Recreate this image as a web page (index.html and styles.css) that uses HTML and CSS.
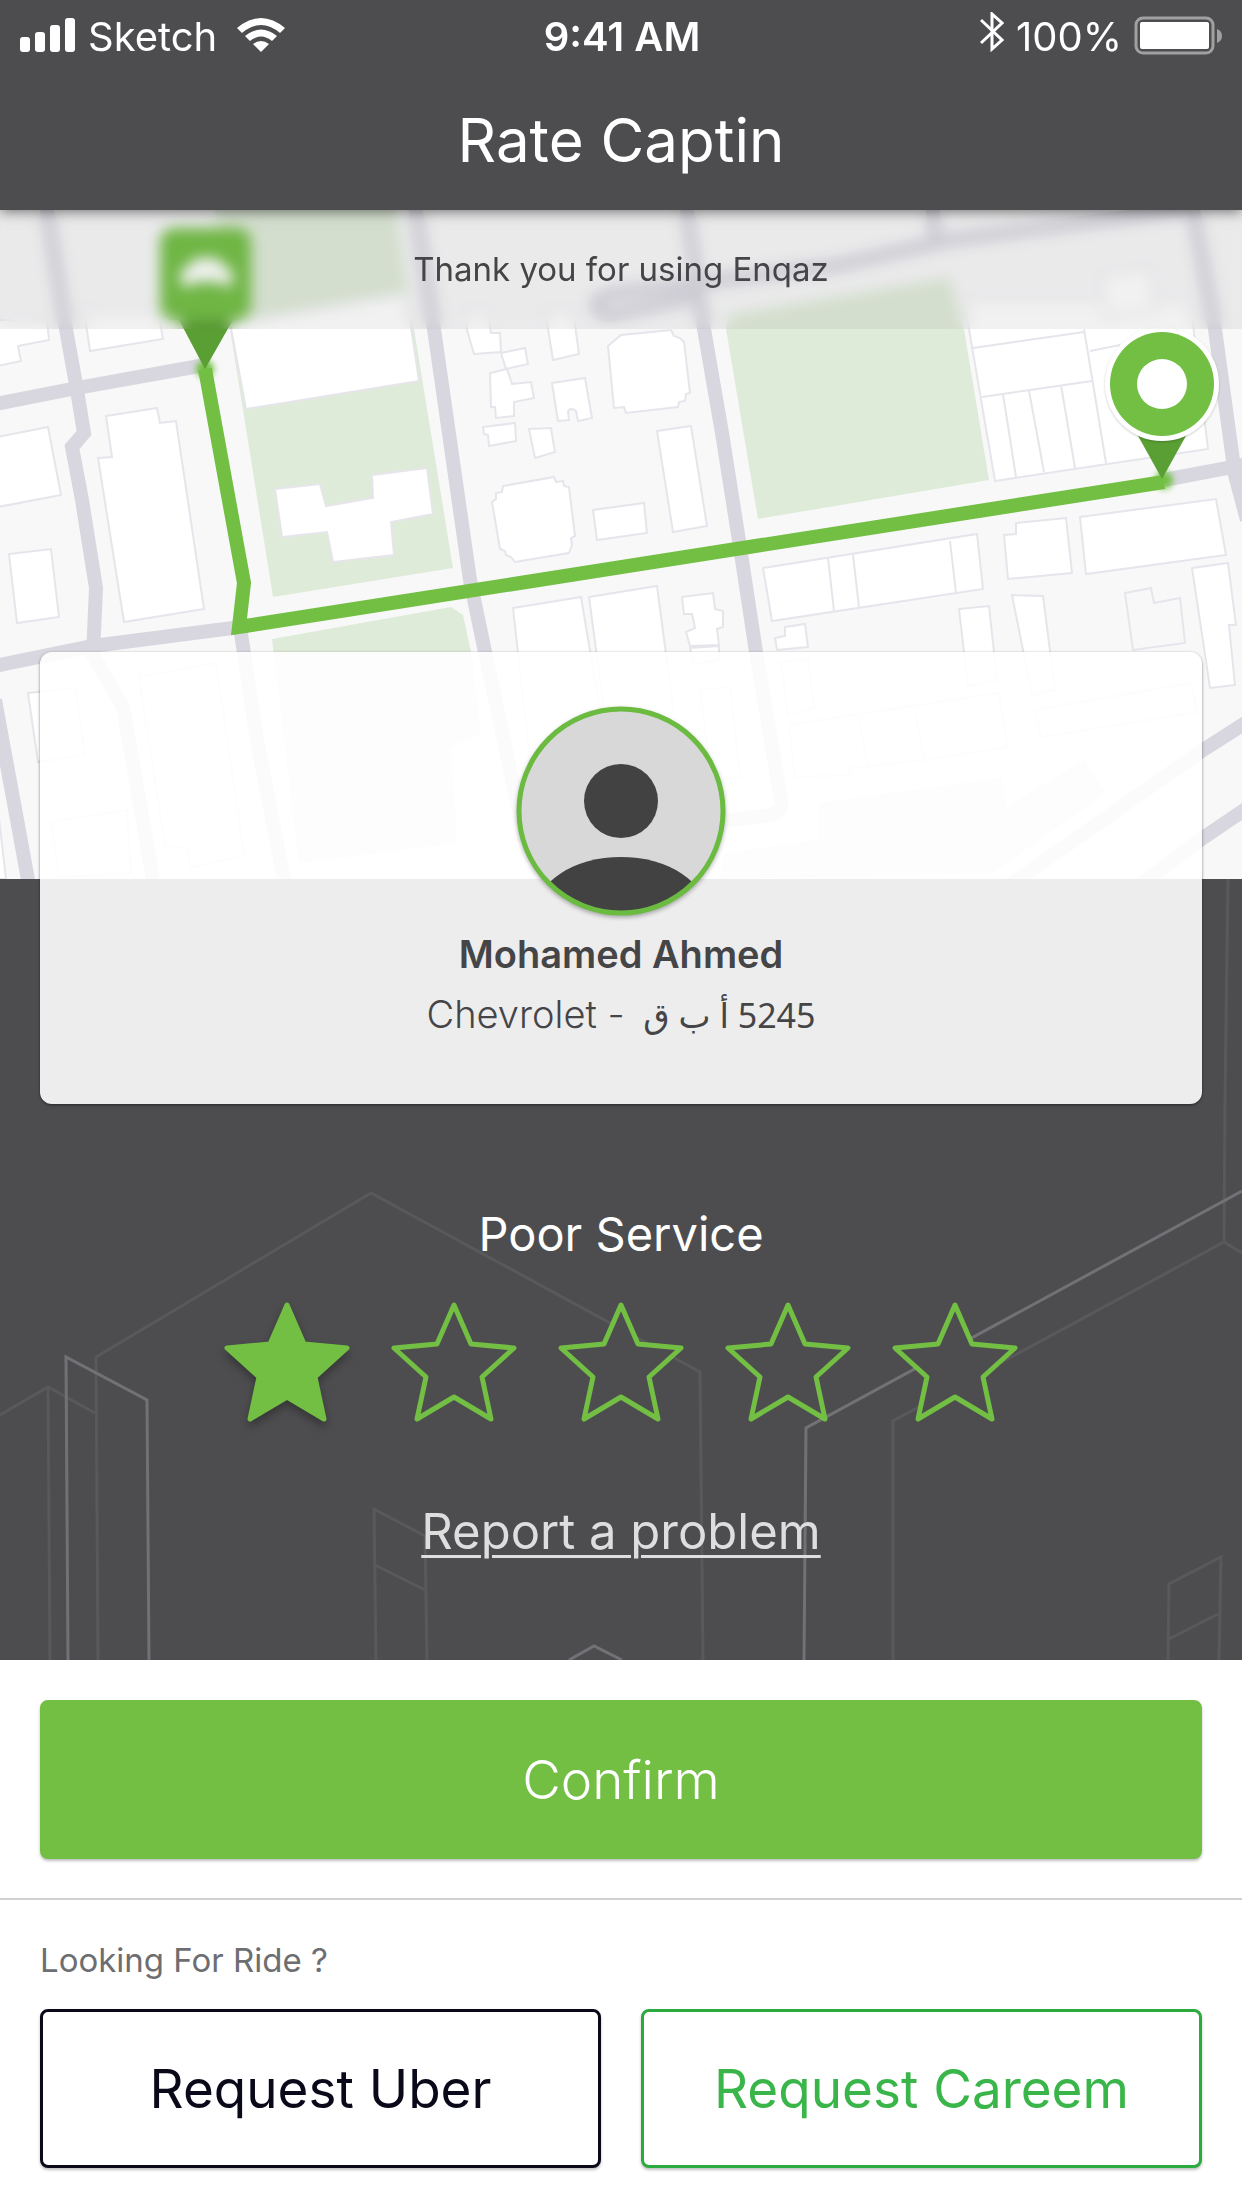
FILE: index.html
```html
<!DOCTYPE html>
<html lang="en">
<head>
    <meta charset="UTF-8">
    <meta name="viewport" content="width=device-width, initial-scale=1.0">
    <title>Rate Captin</title>
    <link rel="stylesheet" href="styles.css">
</head>
<body>
    <header class="app-header">
        <div class="status-bar">
            <div class="status-side">
                <svg class="icon-signal" viewBox="0 0 56 36" aria-hidden="true">
                    <rect x="0" y="19" width="10" height="15" rx="3"/>
                    <rect x="15" y="14" width="10" height="20" rx="3"/>
                    <rect x="30" y="7" width="10" height="27" rx="3"/>
                    <rect x="45" y="0" width="10" height="34" rx="3"/>
                </svg>
                <span>Sketch</span>
                <svg class="icon-wifi" viewBox="0 0 48 36" aria-hidden="true">
                    <path d="M0 10Q24 -10 48 10L43 15Q24 -1 5 15Z"/>
                    <path d="M8 18Q24 5 40 18L35 23Q24 14 13 23Z"/>
                    <path d="M16 26Q24 20 32 26L24 34Z"/>
                </svg>
            </div>
            <div class="status-time">9:41 AM</div>
            <div class="status-side status-right">
                <svg class="icon-bluetooth" viewBox="0 0 24 40" aria-hidden="true">
                    <path d="M1 8L22 28L12 37V2L22 11L1 31"/>
                </svg>
                <span>100%</span>
                <svg class="icon-battery" viewBox="0 0 90 40" aria-hidden="true">
                    <rect class="battery-shell" x="2" y="2" width="77" height="35" rx="7"/>
                    <rect x="6" y="6" width="69" height="27" rx="2"/>
                    <path class="battery-cap" d="M83 13Q88 15 88 20T83 27Z"/>
                </svg>
            </div>
        </div>
        <h1 class="page-title">Rate Captin</h1>
    </header>

    <main>
        <div class="map-area">
            <svg class="map" viewBox="0 210 1242 669" preserveAspectRatio="xMidYMin slice" role="img" aria-label="Trip route">
                <rect class="land" x="0" y="210" width="1242" height="669"/>

                <!-- parks -->
                <g class="park">
                    <path d="M215 210H396L414 329L453 568L273 597L230 329Z"/>
                    <path d="M272 639L451 607L463 615L471 652L481 733L451 747L457 843L299 863Z"/>
                    <path d="M728 315L950 277L964 329L989 480L758 519L726 329Z"/>
                    <path d="M819 803L1001 778L1007 807L1084 760L1106 793L993 873L720 879L724 853L819 840Z"/>
                </g>

                <!-- buildings -->
                <g class="building">
                    <path d="M-2 320H47L49 340L18 346L21 361L-2 366Z"/>
                    <path d="M84 310L90 351L163 339L158 310Z"/>
                    <path d="M-2 437L48 427L61 495L-2 507Z"/>
                    <path d="M106 416L157 408L160 423L176 421L204 609L124 622L98 458L112 457Z"/>
                    <path d="M9 554L51 549L59 617L17 623Z"/>
                    <path d="M230 323L406 293L419 381L246 409Z"/>
                    <path d="M275 489L320 484L326 506L373 498L372 475L427 468L433 514L391 522L394 555L333 562L327 532L282 537Z"/>
                    <path d="M465 310L467 330L474 354L501 352L500 333H491L488 310Z"/>
                    <path d="M501 353L525 348L528 364L506 369Z"/>
                    <path d="M490 373L507 369L512 384L531 382L534 398L514 402V416L496 418L495 407H491Z"/>
                    <path d="M545 310L553 360L579 354L573 310Z"/>
                    <path d="M552 383L585 378L592 418L578 421L576 411Q571 407 568 411L569 420L558 421Z"/>
                    <path d="M483 427L515 423L516 441L489 446L488 435L484 434Z"/>
                    <path d="M529 429L551 428L555 452L535 458Z"/>
                    <path d="M503 486L554 477L556 482L563 481L564 486L569 487L575 536L571 538L572 545L569 553L515 562L511 557L506 555L505 551L500 549L492 502L496 499V493L502 492Z"/>
                    <path d="M593 510L644 503L647 533L597 540Z"/>
                    <path d="M608 346L621 335L671 330L674 336L680 338L684 342L690 393L686 394L685 401L679 402L678 407L626 413L624 407L614 408Z"/>
                    <path d="M657 431L691 426L707 526L673 532Z"/>
                    <path d="M513 608L581 597L605 740L530 760Z"/>
                    <path d="M589 597L657 586L680 760L612 770Z"/>
                    <path d="M682 597L713 593L715 609L723 611V627L717 629L719 645L690 646L686 632L695 628L692 614H684Z"/>
                    <path d="M690 648L719 646V660L694 664Z"/>
                    <path d="M763 568L977 534L983 589L772 621ZM828 558L834 611M853 555L859 607M950 541L956 593"/>
                    <path d="M785 627L805 624L808 647L777 650L775 638L785 636Z"/>
                    <path d="M1016 523L1066 518L1072 573L1008 579L1004 535L1016 534Z"/>
                    <path d="M1080 517L1216 499L1226 555L1086 574Z"/>
                    <path d="M959 609L989 606L997 680L968 686Z"/>
                    <path d="M1012 595L1043 596L1055 690L1032 695Z"/>
                    <path class="land" d="M1125 593L1151 588L1154 603L1180 598L1185 643L1133 650Z"/>
                    <path d="M1192 568L1228 563L1236 625H1229L1235 685L1210 688Z"/>
                    <path d="M964 300L995 481L1208 449L1190 300ZM973 348L1084 332M982 397L1092 381M1084 329L1106 463M1003 394L1016 477M1029 391L1044 472M1061 385L1075 468M1090 351L1120 345"/>
                    <path d="M28 693L75 688L85 755L38 762Z"/>
                    <path d="M139 677L216 663L244 855L190 868L188 848L165 845Z"/>
                    <path d="M51 822L127 810L131 873L59 877Z"/>
                    <path d="M-2 810L6 879H-2Z"/>
                    <path d="M700 690L730 687L740 777L712 780Z"/>
                    <path d="M781 662L808 659L814 708L788 715Z"/>
                    <path d="M789 725L999 693L1007 747L924 760L850 768L849 775L795 777ZM858 716L868 768M914 706L924 760"/>
                    <path d="M1035 710L1191 683L1197 712L1041 737Z"/>
                    <path d="M1100 275L1150 268L1156 310L1106 318Z"/>
                </g>

                <!-- streets -->
                <g class="street">
                    <path d="M46 205L66 329L77 390L84 433L72 447L82 500L96 588L93 655L123 707L154 885"/>
                    <path d="M-5 404L77 388L205 365"/>
                    <path d="M-5 666L93 646L240 627L257 740L285 885"/>
                    <path d="M-5 700L29 885"/>
                    <path d="M415 205L434 329L470 580L485 652L511 773L525 840"/>
                    <path d="M686 205L704 329L722 433L740 547L756 652L781 800Q783 812 770 815L525 845"/>
                    <path d="M1200 208L950 240L839 265L618 293Q596 296 596 306Q600 318 621 313L700 296"/>
                    <path d="M932 205L936 243"/>
                    <path d="M1192 205L1215 329L1235 475L1247 520"/>
                    <path d="M1164 480L1233 467L1247 464"/>
                    <path d="M1250 720L1203 750L1010 885"/>
                    <path d="M1250 806L1203 838L1140 885"/>
                </g>

                <!-- route and pins -->
                <circle class="route-glow" cx="205" cy="369" r="9"/>
                <circle class="route-glow" cx="1164" cy="480" r="9"/>
                <path class="route" d="M205 369L244 583L239 627L1164 482"/>
                <path class="pin-tip" d="M178 318H234L205 369Z"/>
                <rect class="pin" x="160" y="228" width="91" height="92" rx="14"/>
                <path class="pin-hole" d="M181 270L189 266L195 258H218L224 266L232 270V286H224L220 282H194L190 286H181Z"/>
                <path class="pin-tip" d="M1137 434H1187L1162 479Z"/>
                <circle class="pin-ring" cx="1162" cy="384" r="57"/>
                <circle class="pin" cx="1162" cy="384" r="52"/>
                <circle class="pin-hole" cx="1162" cy="384" r="25"/>
            </svg>
            <p class="banner">Thank you for using Enqaz</p>
        </div>

        <section class="rating">
            <svg class="skyline" viewBox="0 879 1242 781" preserveAspectRatio="xMidYMax slice" aria-hidden="true">
                <path d="M0 1415L48 1387L95 1413M48 1387L50 1660"/>
                <path d="M98 1660L96 1357L371 1193L700 1372L703 1660"/>
                <path d="M376 1660L374 1509L425 1536L427 1660M375 1565L425 1590"/>
                <path d="M893 1660V1421L1224 1242L1242 1253M1224 1242L1225 1100L1228 879"/>
                <path d="M1168 1660L1169 1584L1221 1557L1219 1660M1169 1639L1218 1614"/>
                <path class="near" d="M68 1660L66 1357L147 1400L149 1660"/>
                <path class="near" d="M569 1660L594 1646L622 1660"/>
                <path class="near" d="M804 1660L806 1428L1242 1191"/>
            </svg>

            <div class="driver-card">
                <svg class="avatar" viewBox="0 0 210 210" role="img" aria-label="Driver photo">
                    <defs>
                        <clipPath id="avatar-clip"><circle cx="105" cy="105" r="102"/></clipPath>
                    </defs>
                    <circle class="avatar-bg" cx="105" cy="105" r="102"/>
                    <g class="avatar-person" clip-path="url(#avatar-clip)">
                        <circle cx="105" cy="95" r="37"/>
                        <ellipse cx="105" cy="208" rx="86" ry="57"/>
                    </g>
                    <circle class="avatar-ring" cx="105" cy="105" r="102"/>
                </svg>
                <h2 class="driver-name">Mohamed Ahmed</h2>
                <p class="driver-car">Chevrolet - <bdi class="plate" dir="rtl" lang="ar">5245 أ ب ق</bdi></p>
            </div>

            <fieldset class="stars">
                <legend class="stars-title">Poor Service</legend>
                <div class="stars-row">
                    <label class="star">
                        <input type="radio" name="rating" value="1" aria-label="1 star" checked>
                        <svg viewBox="0 0 126 120"><path d="M63 3L80 42L123 46L91 75L100 117L63 95L26 117L35 75L3 46L46 42Z"/></svg>
                    </label>
                    <label class="star">
                        <input type="radio" name="rating" value="2" aria-label="2 stars">
                        <svg viewBox="0 0 126 120"><path d="M63 3L80 42L123 46L91 75L100 117L63 95L26 117L35 75L3 46L46 42Z"/></svg>
                    </label>
                    <label class="star">
                        <input type="radio" name="rating" value="3" aria-label="3 stars">
                        <svg viewBox="0 0 126 120"><path d="M63 3L80 42L123 46L91 75L100 117L63 95L26 117L35 75L3 46L46 42Z"/></svg>
                    </label>
                    <label class="star">
                        <input type="radio" name="rating" value="4" aria-label="4 stars">
                        <svg viewBox="0 0 126 120"><path d="M63 3L80 42L123 46L91 75L100 117L63 95L26 117L35 75L3 46L46 42Z"/></svg>
                    </label>
                    <label class="star">
                        <input type="radio" name="rating" value="5" aria-label="5 stars">
                        <svg viewBox="0 0 126 120"><path d="M63 3L80 42L123 46L91 75L100 117L63 95L26 117L35 75L3 46L46 42Z"/></svg>
                    </label>
                </div>
            </fieldset>

            <a href="#" class="report-link">Report a problem</a>
        </section>

        <div class="confirm-bar">
            <button type="button" class="btn btn-confirm">Confirm</button>
        </div>

        <section class="rides">
            <h2 class="rides-title">Looking For Ride ?</h2>
            <div class="rides-row">
                <button type="button" class="btn btn-uber">Request Uber</button>
                <button type="button" class="btn btn-careem">Request Careem</button>
            </div>
        </section>
    </main>
</body>
</html>
```
FILE: styles.css
```css
:root {
    --green: #72bf44;
    --dark: #4d4d4f;
}

* {
    box-sizing: border-box;
}

body {
    margin: 0;
    font-family: Inter, "Liberation Sans", sans-serif;
    background: #fff;
    color: #454547;
}

h1, h2, p {
    margin: 0;
    font-weight: 400;
}

/* header */
.app-header {
    position: relative;
    z-index: 2;
    height: 210px;
    background: var(--dark);
    color: #fff;
    box-shadow: 0 2px 12px rgba(0, 0, 0, 0.5);
}

.status-bar {
    display: grid;
    grid-template-columns: 1fr auto 1fr;
    align-items: center;
    height: 72px;
    padding: 0 18px 0 20px;
    font-size: 40px;
}

.status-side {
    display: flex;
    align-items: center;
    gap: 12px;
    fill: #fff;
}

.status-right {
    justify-content: flex-end;
}

.status-time {
    font-weight: 600;
}

.icon-signal {
    width: 56px;
    height: 36px;
}

.icon-wifi {
    width: 48px;
    height: 36px;
    margin-left: 8px;
}

.icon-bluetooth {
    width: 24px;
    height: 40px;
    margin-bottom: 8px;
    fill: none;
    stroke: #fff;
    stroke-width: 3;
}

.icon-battery {
    width: 90px;
    height: 40px;
}

.battery-shell {
    fill: none;
    stroke: #a0a0a2;
    stroke-width: 3;
}

.battery-cap {
    fill: #a0a0a2;
}

.page-title {
    font-size: 60px;
    line-height: 136px;
    text-align: center;
}

/* map */
.map-area {
    position: relative;
}

.map {
    display: block;
    width: 100%;
    height: 669px;
}

.land {
    fill: #f8f8f9;
}

.park {
    fill: #dfebd9;
}

.building {
    fill: #fff;
    stroke: #e6e5eb;
    stroke-width: 2;
}

.street {
    fill: none;
    stroke: #d8d7df;
    stroke-width: 14;
}

.route {
    fill: none;
    stroke: var(--green);
    stroke-width: 14;
}

.route-glow {
    fill: var(--green);
    filter: blur(3px);
}

.pin {
    fill: var(--green);
}

.pin-tip {
    fill: #5a9f33;
}

.pin-ring {
    fill: #fff;
    filter: drop-shadow(0 1px 1px rgba(0, 0, 0, 0.2));
}

.pin-hole {
    fill: #fff;
}

.banner {
    position: absolute;
    top: 0;
    left: 0;
    right: 0;
    height: 119px;
    background: rgba(77, 77, 79, 0.08);
    backdrop-filter: blur(7px);
    font-size: 33px;
    line-height: 119px;
    text-align: center;
}

/* driver and rating */
.rating {
    position: relative;
    display: flex;
    flex-direction: column;
    align-items: center;
    height: 781px;
    padding: 0 40px;
    background: var(--dark);
}

.skyline {
    position: absolute;
    top: 0;
    left: 0;
    width: 100%;
    height: 100%;
    fill: none;
    stroke: #59595b;
    stroke-width: 3;
}

.skyline .near {
    stroke: #727276;
}

.driver-card {
    position: relative;
    align-self: stretch;
    display: flex;
    flex-direction: column;
    align-items: center;
    height: 452px;
    margin-top: -227px;
    padding-top: 54px;
    background: rgba(255, 255, 255, 0.9);
    border-radius: 12px;
    box-shadow: 0 1px 3px rgba(0, 0, 0, 0.5);
}

.avatar {
    width: 210px;
    height: 210px;
    filter: drop-shadow(0 2px 2px rgba(0, 0, 0, 0.3));
}

.avatar-bg {
    fill: #d8d8d8;
}

.avatar-person {
    fill: #424242;
}

.avatar-ring {
    fill: none;
    stroke: #6abb3f;
    stroke-width: 5;
}

.driver-name {
    margin-top: 8px;
    font-size: 38px;
    font-weight: 600;
    line-height: 60px;
}

.driver-car {
    font-size: 38px;
    font-weight: 300;
    line-height: 60px;
}

.plate {
    margin-left: 8px;
    font-family: "Noto Sans", "DejaVu Sans", sans-serif;
    font-size: 34px;
    font-weight: 400;
}

.stars {
    position: relative;
    margin: 100px 0 0;
    padding: 0;
    border: 0;
}

.stars-title {
    width: 100%;
    padding: 0;
    color: #fff;
    font-size: 47px;
    line-height: 60px;
    text-align: center;
}

.stars-row {
    display: flex;
    gap: 41px;
    margin-top: 38px;
}

.star {
    position: relative;
    width: 126px;
    height: 120px;
    cursor: pointer;
}

.star input {
    position: absolute;
    inset: 0;
    width: 100%;
    height: 100%;
    margin: 0;
    opacity: 0;
}

.star svg {
    display: block;
    overflow: visible;
    fill: var(--dark);
    stroke: var(--green);
    stroke-width: 5;
    stroke-linejoin: round;
}

/* fill the chosen star and those before it */
.star:has(input:checked) svg,
.star:has(~ .star input:checked) svg {
    fill: var(--green);
    filter: drop-shadow(0 5px 4px rgba(0, 0, 0, 0.3));
}

.report-link {
    position: relative;
    margin-top: 80px;
    color: #dededf;
    font-size: 49px;
    line-height: 60px;
    text-decoration-thickness: 3px;
    text-underline-offset: 6px;
}

/* buttons */
.btn {
    height: 159px;
    border: 3px solid;
    border-radius: 8px;
    background: #fff;
    font-family: inherit;
    font-size: 53px;
    box-shadow: 0 2px 3px rgba(0, 0, 0, 0.25);
    cursor: pointer;
}

.confirm-bar {
    padding: 40px 40px 39px;
    border-bottom: 2px solid #d0d0d0;
}

.btn-confirm {
    display: block;
    width: 100%;
    border-color: var(--green);
    background: var(--green);
    color: #fff;
    font-weight: 300;
}

.rides {
    padding: 40px;
}

.rides-title {
    color: #6d6e71;
    font-size: 33px;
    line-height: 40px;
}

.rides-row {
    display: grid;
    grid-template-columns: 1fr 1fr;
    gap: 40px;
    margin-top: 29px;
}

.btn-uber {
    border-color: #09091a;
    color: #09091a;
}

.btn-careem {
    border-color: #2aaa3f;
    color: #3ab54a;
}
```
